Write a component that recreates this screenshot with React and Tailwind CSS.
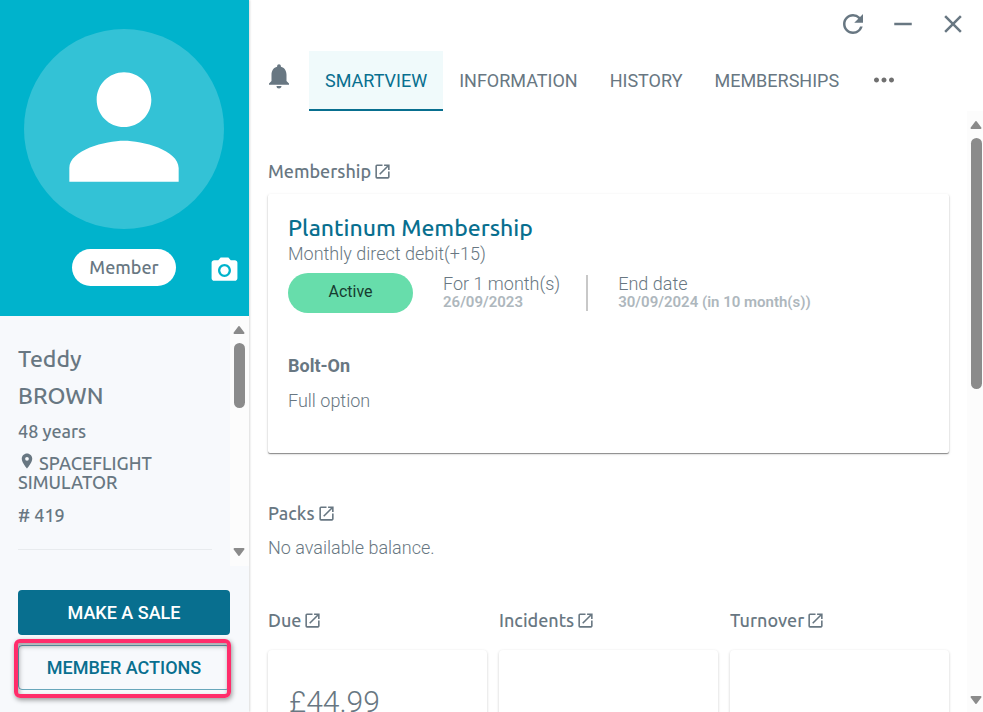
import {
    MdClose,
    MdMoreHoriz,
    MdNotifications,
    MdOpenInNew,
    MdPerson,
    MdPhotoCamera,
    MdPlace,
    MdRefresh,
    MdRemove,
} from 'react-icons/md'

const tabs = ['SMARTVIEW', 'INFORMATION', 'HISTORY', 'MEMBERSHIPS']

const Arrow = ({ down }) => (
    <svg width="12" height="10" viewBox="0 0 12 10" className="shrink-0 text-[#8b8b8b]">
        <path
            d={down ? 'M1.5 2h9L6 8z' : 'M1.5 8h9L6 2z'}
            fill="currentColor"
            stroke="currentColor"
            strokeWidth="2"
            strokeLinejoin="round"
        />
    </svg>
)

const ScrollTrack = ({ className, thumb }) => (
    <div aria-hidden="true" className={`flex shrink-0 flex-col items-end bg-[#fcfcfc] pt-[9px] ${className}`}>
        <Arrow />
        <div className={`mt-2 w-[11px] rounded-full bg-[#8b8b8b] ${thumb}`} />
        <div className="flex-1" />
        <Arrow down />
    </div>
)

const SectionTitle = ({ children }) => (
    <h2 className="font-['Ubuntu','Noto_Sans',sans-serif] text-lg leading-6 font-medium">
        <a href="#" className="inline-flex items-center gap-0.5">
            {children}
            <MdOpenInNew className="size-[19px]" />
        </a>
    </h2>
)

const Sidebar = () => (
    <aside className="z-10 flex w-[249px] shrink-0 flex-col bg-[#f7f9fc] shadow-[1px_0_2px_rgba(0,0,0,0.15)]">
        <div className="flex h-[316px] shrink-0 flex-col items-center bg-[#00b3cc] pt-[29px] pr-px">
            <div className="flex size-[200px] items-center justify-center rounded-full bg-white/20 pb-1">
                <MdPerson className="size-[164px] text-white" />
            </div>
            <div className="mt-5 grid w-full grid-cols-[1fr_auto_1fr] items-center">
                <span className="col-start-2 rounded-full bg-white px-[17px] py-1.5 font-['Ubuntu','Noto_Sans',sans-serif] text-lg leading-[25px] font-medium">
                    Member
                </span>
                <button type="button" aria-label="Change photo" className="mr-2 justify-self-end pt-1.5 text-white">
                    <MdPhotoCamera className="size-[31px]" />
                </button>
            </div>
        </div>

        <div className="flex min-h-0 flex-1">
            <div className="min-w-0 flex-1 overflow-hidden pt-6 pr-[18px] pl-[18px] font-['Ubuntu','Noto_Sans',sans-serif] font-medium">
                <h1 className="text-[23px] leading-[37px]">
                    Teddy
                    <br />
                    BROWN
                </h1>
                <p className="mt-[5px] text-lg leading-6">48 years</p>
                <p className="mt-[9px] text-lg leading-[19px]">
                    <MdPlace className="mr-[3px] inline size-[18px] align-baseline" />
                    SPACEFLIGHT SIMULATOR
                </p>
                <p className="mt-[11px] text-lg leading-6">#&nbsp;419</p>
                <hr className="mt-[22px] border-[#e8ebee]" />
            </div>
            <ScrollTrack className="w-[19px] pr-1 pb-[9px]" thumb="h-[65px]" />
        </div>

        <div className="flex flex-col gap-2.5 pt-6 pr-[19px] pb-[22px] pl-[18px] text-lg font-medium">
            <button type="button" className="h-[45px] w-full rounded bg-[#086f8f] text-white">
                MAKE A SALE
            </button>
            <div className="relative">
                <button type="button" className="h-[45px] w-full rounded border border-[#086f8f]/60 text-[#086f8f]">
                    MEMBER ACTIONS
                </button>
                <div className="pointer-events-none absolute -top-1.5 -right-px -bottom-2 -left-1 rounded-md border-4 border-[#ff2d6b] shadow-[1px_2px_5px_rgba(0,0,0,0.4),inset_1px_3px_5px_rgba(0,0,0,0.35)]" />
            </div>
        </div>
    </aside>
)

const WindowControls = () => (
    <div className="flex justify-end gap-5 px-[15px] pt-[9px] pb-3">
        <button type="button" aria-label="Refresh">
            <MdRefresh className="size-[30px]" />
        </button>
        <button type="button" aria-label="Minimise">
            <MdRemove className="size-[30px]" />
        </button>
        <button type="button" aria-label="Close">
            <MdClose className="size-[30px]" />
        </button>
    </div>
)

const TabBar = () => (
    <nav className="flex h-[60px] shrink-0 items-stretch pl-[15px]">
        <button type="button" aria-label="Notifications" className="mr-[15px] pb-2.5">
            <MdNotifications className="size-[30px]" />
        </button>
        {tabs.map((tab, i) => (
            <button
                key={tab}
                type="button"
                className={
                    i === 0
                        ? 'border-b-2 border-[#086f8f] bg-[#f0fafb] px-4 pt-0.5 text-lg text-[#086f8f]'
                        : 'border-b-2 border-transparent px-4 pt-0.5 text-lg'
                }
            >
                {tab}
            </button>
        ))}
        <button type="button" aria-label="More tabs" className="px-3.5 pb-0.5 text-[#707070]">
            <MdMoreHoriz className="size-[30px]" />
        </button>
    </nav>
)

const MembershipCard = () => (
    <div className="mt-[11px] rounded-xs bg-white px-5 pt-5 pb-10 text-lg leading-6 font-light shadow-[0_1px_1px_rgba(0,0,0,0.4),0_1px_3px_rgba(0,0,0,0.15)]">
        <h3 className="font-['Ubuntu','Noto_Sans',sans-serif] text-[23px] leading-7 font-medium text-[#086f8f]">
            Plantinum Membership
        </h3>
        <p>Monthly direct debit(+15)</p>
        <div className="mt-[7px] flex items-center">
            <span className="flex h-10 w-[125px] items-center justify-center rounded-full bg-[#67ddab] pb-0.5 text-base font-normal text-[#173c30]">
                Active
            </span>
            <div className="ml-[30px] leading-[18px]">
                <p>For 1 month(s)</p>
                <p className="text-[15px] font-semibold text-[#aeb7bd]">26/09/2023</p>
            </div>
            <div className="ml-[26px] border-l-2 border-[#c8c8c8] pl-[30px] leading-[18px]">
                <p>End date</p>
                <p className="text-[15px] font-semibold text-[#aeb7bd]">30/09/2024 (in 10 month(s))</p>
            </div>
        </div>
        <h4 className="mt-[41px] font-bold">Bolt-On</h4>
        <p className="mt-[11px]">Full option</p>
    </div>
)

const StatCard = ({ title, value }) => (
    <section>
        <SectionTitle>{title}</SectionTitle>
        <div className="mt-[18px] h-40 rounded bg-white px-[21px] pt-[34px] text-3xl font-light shadow-[0_1px_3px_rgba(0,0,0,0.2)]">
            {value}
        </div>
    </section>
)

const App = () => (
    <div className="flex h-screen overflow-hidden bg-white font-['Roboto',sans-serif] text-[#687782]">
        <Sidebar />
        <main className="flex min-w-0 flex-1 flex-col">
            <WindowControls />
            <TabBar />
            <div className="flex min-h-0 flex-1">
                <div className="min-w-0 flex-1 overflow-hidden pt-12 pr-[18px] pl-[19px]">
                    <section>
                        <SectionTitle>Membership</SectionTitle>
                        <MembershipCard />
                    </section>
                    <section className="mt-12">
                        <SectionTitle>Packs</SectionTitle>
                        <p className="mt-[11px] text-lg leading-6 font-light">No available balance.</p>
                    </section>
                    <div className="mt-12 grid grid-cols-3 gap-3">
                        <StatCard title="Due" value="£44.99" />
                        <StatCard title="Incidents" />
                        <StatCard title="Turnover" />
                    </div>
                </div>
                <ScrollTrack className="w-4 pr-px pb-[7px]" thumb="h-[251px]" />
            </div>
        </main>
    </div>
)

export default App
